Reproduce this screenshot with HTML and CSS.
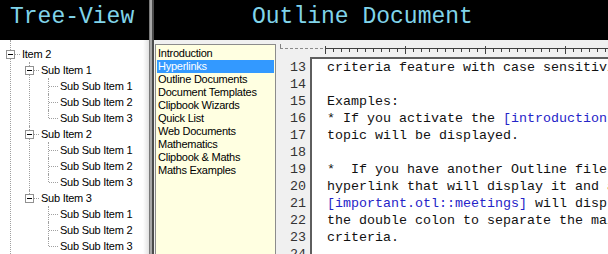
FILE: index.html
```html
<!DOCTYPE html>
<html lang="en">
<head>
    <meta charset="UTF-8">
    <meta name="viewport" content="width=device-width, initial-scale=1.0">
    <title>Outline Document</title>
    <link rel="stylesheet" href="styles.css">
</head>
<body>
    <div class="left">
        <div class="head">Tree-View</div>
        <ul class="tree">
            <li>
                <div class="row"><span class="twig"><span class="box"></span></span><span class="label">Item 2</span></div>
                <ul>
                    <li>
                        <div class="row"><span class="twig"><span class="box"></span></span><span class="label">Sub Item 1</span></div>
                        <ul>
                            <li><div class="row"><span class="twig"></span><span class="label">Sub Sub Item 1</span></div></li>
                            <li><div class="row"><span class="twig"></span><span class="label">Sub Sub Item 2</span></div></li>
                            <li><div class="row"><span class="twig"></span><span class="label">Sub Sub Item 3</span></div></li>
                        </ul>
                    </li>
                    <li>
                        <div class="row"><span class="twig"><span class="box"></span></span><span class="label">Sub Item 2</span></div>
                        <ul>
                            <li><div class="row"><span class="twig"></span><span class="label">Sub Sub Item 1</span></div></li>
                            <li><div class="row"><span class="twig"></span><span class="label">Sub Sub Item 2</span></div></li>
                            <li><div class="row"><span class="twig"></span><span class="label">Sub Sub Item 3</span></div></li>
                        </ul>
                    </li>
                    <li>
                        <div class="row"><span class="twig"><span class="box"></span></span><span class="label">Sub Item 3</span></div>
                        <ul>
                            <li><div class="row"><span class="twig"></span><span class="label">Sub Sub Item 1</span></div></li>
                            <li><div class="row"><span class="twig"></span><span class="label">Sub Sub Item 2</span></div></li>
                            <li><div class="row"><span class="twig"></span><span class="label">Sub Sub Item 3</span></div></li>
                        </ul>
                    </li>
                </ul>
            </li>
        </ul>
    </div>

    <div class="splitter"></div>

    <div class="right">
        <div class="head doc-head">Outline Document</div>
        <div class="work">
            <ul class="topics">
                <li>Introduction</li>
                <li class="sel">Hyperlinks</li>
                <li>Outline Documents</li>
                <li>Document Templates</li>
                <li>Clipbook Wizards</li>
                <li>Quick List</li>
                <li>Web Documents</li>
                <li>Mathematics</li>
                <li>Clipbook &amp; Maths</li>
                <li>Maths Examples</li>
            </ul>
            <div class="editor">
                <svg class="ruler" width="328" height="13" viewBox="0 0 328 13">
                    <line x1="0.5" y1="0" x2="0.5" y2="5" stroke="#808080"/>
                    <line x1="0" y1="4.5" x2="45" y2="4.5" stroke="#8a8a8a" stroke-dasharray="3 2"/>
                    <line x1="45" y1="4.5" x2="328" y2="4.5" stroke="#404040"/>
                    <g stroke="#404040">
                        <line x1="45.5" y1="2" x2="45.5" y2="10"/>
                        <line x1="53.5" y1="4" x2="53.5" y2="8"/>
                        <line x1="61.5" y1="4" x2="61.5" y2="8"/>
                        <line x1="69.5" y1="4" x2="69.5" y2="8"/>
                        <line x1="77.5" y1="4" x2="77.5" y2="8"/>
                        <line x1="85.5" y1="4" x2="85.5" y2="8"/>
                        <line x1="93.5" y1="4" x2="93.5" y2="8"/>
                        <line x1="101.5" y1="4" x2="101.5" y2="8"/>
                        <line x1="109.5" y1="4" x2="109.5" y2="8"/>
                        <line x1="117.5" y1="4" x2="117.5" y2="8"/>
                        <line x1="125.5" y1="2" x2="125.5" y2="10"/>
                        <line x1="133.5" y1="4" x2="133.5" y2="8"/>
                        <line x1="141.5" y1="4" x2="141.5" y2="8"/>
                        <line x1="149.5" y1="4" x2="149.5" y2="8"/>
                        <line x1="157.5" y1="4" x2="157.5" y2="8"/>
                        <line x1="165.5" y1="4" x2="165.5" y2="8"/>
                        <line x1="173.5" y1="4" x2="173.5" y2="8"/>
                        <line x1="181.5" y1="4" x2="181.5" y2="8"/>
                        <line x1="189.5" y1="4" x2="189.5" y2="8"/>
                        <line x1="197.5" y1="4" x2="197.5" y2="8"/>
                        <line x1="205.5" y1="2" x2="205.5" y2="10"/>
                        <line x1="213.5" y1="4" x2="213.5" y2="8"/>
                        <line x1="221.5" y1="4" x2="221.5" y2="8"/>
                        <line x1="229.5" y1="4" x2="229.5" y2="8"/>
                        <line x1="237.5" y1="4" x2="237.5" y2="8"/>
                        <line x1="245.5" y1="4" x2="245.5" y2="8"/>
                        <line x1="253.5" y1="4" x2="253.5" y2="8"/>
                        <line x1="261.5" y1="4" x2="261.5" y2="8"/>
                        <line x1="269.5" y1="4" x2="269.5" y2="8"/>
                        <line x1="277.5" y1="4" x2="277.5" y2="8"/>
                        <line x1="285.5" y1="2" x2="285.5" y2="10"/>
                        <line x1="293.5" y1="4" x2="293.5" y2="8"/>
                        <line x1="301.5" y1="4" x2="301.5" y2="8"/>
                        <line x1="309.5" y1="4" x2="309.5" y2="8"/>
                        <line x1="317.5" y1="4" x2="317.5" y2="8"/>
                        <line x1="325.5" y1="4" x2="325.5" y2="8"/>
                    </g>
                </svg>
                <div class="pane">
                    <div class="gutter">13<br>14<br>15<br>16<br>17<br>18<br>19<br>20<br>21<br>22<br>23<br>24</div>
<pre class="text">criteria feature with case sensitivity.

Examples:
* If you activate the <span class="link">[introduction]</span> hyperlink the introduction
topic will be displayed.

*  If you have another Outline file called important.otl then the
hyperlink that will display it and a topic called meetings
<span class="link">[important.otl::meetings]</span> will display the meetings topic.  Note
the double colon to separate the main file and the topic search
criteria.
</pre>
                </div>
            </div>
        </div>
    </div>
</body>
</html>
```

FILE: styles.css
```css
body {
    margin: 0;
    width: 608px;
    height: 254px;
    overflow: hidden;
    display: flex;
    background-color: #f0f0f0;
    font-family: "Liberation Sans", Arial, sans-serif;
}
.head {
    height: 40px;
    flex: none;
    background-color: #000;
    color: #80d4ea;
    font-family: "Liberation Mono", "Courier New", monospace;
    font-size: 23px;
    line-height: 34px;
    padding-left: 10px;
    white-space: nowrap;
}
.doc-head {
    padding-left: 98px;
}
.left {
    width: 149px;
    flex: none;
    display: flex;
    flex-direction: column;
}
.splitter {
    width: 2px;
    flex: none;
    background-color: #a8a8a8;
    border-left: 1px solid #7a7a7a;
    border-right: 2px solid #4b4b4b;
}
.right {
    flex: 1;
    display: flex;
    flex-direction: column;
    min-width: 0;
}

/* tree */
.tree {
    list-style: none;
    margin: 0;
    padding: 6px 0 0 0;
    flex: 1;
    position: relative;
    overflow: hidden;
    background: linear-gradient(to right, #fff 143px, #e2e2e2 149px);
    font-size: 11px;
    letter-spacing: -0.25px;
    color: #000;
}
.tree::before {
    content: "";
    position: absolute;
    left: 10px;
    top: 0;
    bottom: 0;
    border-left: 1px dotted #a0a0a0;
}
.tree ul {
    list-style: none;
    margin: 0;
    padding: 0 0 0 19px;
}
.tree ul > li {
    position: relative;
}
.tree ul > li::before {
    content: "";
    position: absolute;
    left: 10px;
    top: 0;
    bottom: 0;
    border-left: 1px dotted #a0a0a0;
}
.tree ul > li:last-child::before {
    bottom: auto;
    height: 8px;
}
.row {
    display: flex;
    align-items: center;
    height: 16px;
    line-height: 16px;
    white-space: nowrap;
}
.twig {
    width: 22px;
    height: 16px;
    flex: none;
    position: relative;
}
.twig::after {
    content: "";
    position: absolute;
    left: 11px;
    top: 8px;
    width: 9px;
    border-top: 1px dotted #a0a0a0;
}
.box {
    position: absolute;
    left: 6px;
    top: 4px;
    width: 9px;
    height: 9px;
    box-sizing: border-box;
    border: 1px solid #919191;
    background-color: #fff;
    z-index: 1;
}
.box::after {
    content: "";
    position: absolute;
    left: 1px;
    top: 3px;
    width: 5px;
    height: 1px;
    background-color: #000;
}

/* document area */
.work {
    flex: 1;
    display: flex;
    gap: 4px;
    padding: 4px 0 0 1px;
    min-height: 0;
    overflow: hidden;
}
.topics {
    list-style: none;
    margin: 0;
    padding: 2px 0 0 0;
    width: 121px;
    height: 240px;
    flex: none;
    box-sizing: border-box;
    border: 1px solid #8c8c8c;
    background-color: #ffffe1;
    font-size: 11px;
    letter-spacing: -0.25px;
    color: #000;
}
.topics li {
    height: 13px;
    line-height: 13px;
    margin: 0 1px;
    padding-left: 1px;
    white-space: nowrap;
}
.topics li.sel {
    background-color: #3399ff;
    color: #fff;
}
.editor {
    flex: 1;
    min-width: 0;
    display: flex;
    flex-direction: column;
}
.ruler {
    display: block;
    flex: none;
}
.pane {
    flex: 1;
    display: flex;
    min-height: 0;
}
.gutter {
    width: 30px;
    flex: none;
    box-sizing: border-box;
    padding: 2px 4px 0 0;
    text-align: right;
    font-family: "Liberation Mono", "Courier New", monospace;
    font-size: 13.33px;
    line-height: 17px;
    color: #333;
}
.text {
    flex: 1;
    margin: 0;
    padding: 0 0 0 15px;
    background-color: #fff;
    border-top: 2px solid #5e5e5e;
    border-left: 2px solid #5e5e5e;
    white-space: pre;
    overflow: hidden;
    font-family: "Liberation Mono", "Courier New", monospace;
    font-size: 13.33px;
    line-height: 17px;
    color: #111;
}
.link {
    color: #2424c8;
}
```
